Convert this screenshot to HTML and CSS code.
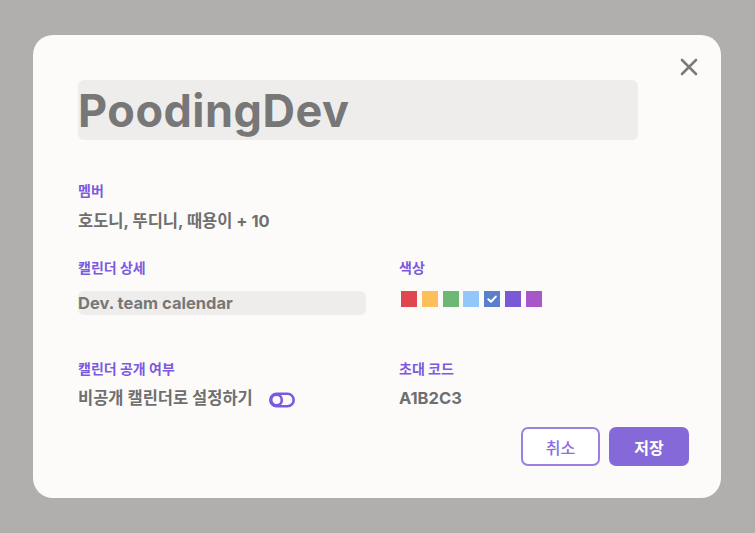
FILE: index.html
```html
<!DOCTYPE html>
<html lang="ko">
<head>
<meta charset="utf-8">
<link rel="stylesheet" href="styles.css">
</head>
<body>
<div class="overlay">
  <div class="modal">
    <button class="close" aria-label="닫기">
      <svg width="18" height="18" viewBox="0 0 18 18"><path d="M2 2L16 16M16 2L2 16" stroke="#7b7b7b" stroke-width="2.6" stroke-linecap="round"/></svg>
    </button>
    <div class="title-box">PoodingDev</div>
    <div class="field members">
      <div class="label">멤버</div>
      <div class="value">호도니, 뚜디니, 때용이 + 10</div>
    </div>
    <div class="grid">
      <div class="field">
        <div class="label">캘린더 상세</div>
        <div class="input">Dev. team calendar</div>
      </div>
      <div class="field">
        <div class="label">색상</div>
        <div class="swatches">
          <span class="sw c1"></span>
          <span class="sw c2"></span>
          <span class="sw c3"></span>
          <span class="sw c4"></span>
          <span class="sw c5"><svg width="16" height="16" viewBox="0 0 16 16"><path d="M4.3 8.3L7 10.8L11.8 5.6" stroke="#fff" stroke-width="2" fill="none" stroke-linecap="round" stroke-linejoin="round"/></svg></span>
          <span class="sw c6"></span>
          <span class="sw c7"></span>
        </div>
      </div>
      <div class="field row2">
        <div class="label">캘린더 공개 여부</div>
        <div class="value toggle-row">비공개 캘린더로 설정하기
          <svg class="toggle" width="26" height="16" viewBox="0 0 26 16"><rect x="1.3" y="1.8" width="23.4" height="12.4" rx="6.2" fill="none" stroke="#7b5ae0" stroke-width="2.6"/><circle cx="7.5" cy="8" r="5.3" fill="none" stroke="#7b5ae0" stroke-width="2.6"/></svg>
        </div>
      </div>
      <div class="field row2">
        <div class="label">초대 코드</div>
        <div class="value">A1B2C3</div>
      </div>
    </div>
    <div class="actions">
      <button class="btn cancel">취소</button>
      <button class="btn save">저장</button>
    </div>
  </div>
</div>
</body>
</html>
```

FILE: styles.css
```css
* { box-sizing: border-box; }
html, body { margin: 0; padding: 0; }
body {
  font-family: Inter, "Noto Sans CJK KR", sans-serif;
  background: #b0afad;
  width: 755px;
  height: 533px;
  overflow: hidden;
}
.overlay {
  padding: 35px 34px 35px 33px;
}
.modal {
  position: relative;
  width: 688px;
  height: 463px;
  background: #fcfbfa;
  border-radius: 20px;
  padding: 45px 32px 32px 45px;
  display: flex;
  flex-direction: column;
}
.close {
  position: absolute;
  top: 23px;
  right: 23px;
  width: 18px;
  height: 18px;
  padding: 0;
  border: 0;
  background: none;
  display: flex;
}
.title-box {
  width: 560px;
  height: 60px;
  background: #eeedeb;
  border-radius: 6px;
  font-size: 45px;
  font-weight: 700;
  color: #777777;
  line-height: 62px;
  padding-left: 0;
  letter-spacing: 0.5px;
}
.field { display: flex; flex-direction: column; }
.members { margin-top: 41px; }
.label {
  font-size: 14px;
  line-height: 20px;
  font-weight: 700;
  color: #7b5ae0;
}
.value {
  font-size: 16.5px;
  line-height: 24px;
  font-weight: 700;
  color: #6f6f6f;
}
.members .value { margin-top: 8px; }
.grid {
  display: grid;
  grid-template-columns: 321px 1fr;
  margin-top: 25px;
  row-gap: 44px;
}
.input {
  margin-top: 13px;
  width: 288px;
  height: 24px;
  background: #eeedeb;
  border-radius: 6px;
  font-size: 16.5px;
  line-height: 24px;
  font-weight: 700;
  color: #777777;
  padding-left: 0;
}
.swatches {
  margin-top: 13px;
  display: flex;
  gap: 4.8px;
  padding-left: 2px;
}
.sw { width: 16px; height: 16px; display: block; }
.c1 { background: #e0464f; }
.c2 { background: #fdbf5a; }
.c3 { background: #6db874; }
.c4 { background: #93c6fb; }
.c5 { background: #5b7fcc; }
.c6 { background: #7b58d6; }
.c7 { background: #a857c8; }
.row2 .value { margin-top: 7px; }
.toggle-row { display: flex; align-items: center; }
.toggle { margin-left: 16px; margin-top: 4px; }
.actions {
  margin-top: auto;
  display: flex;
  justify-content: flex-end;
  gap: 9px;
}
.btn {
  width: 80px;
  height: 39px;
  border-radius: 7px;
  font-family: Inter, "Noto Sans CJK KR", sans-serif;
  font-size: 16px;
  font-weight: 700;
}
.cancel {
  width: 79px;
  background: #fff;
  border: 2px solid #9b80e2;
  color: #8a6fe0;
  font-weight: 500;
}
.save {
  background: #8669d9;
  border: 0;
  color: #fff;
}
```
